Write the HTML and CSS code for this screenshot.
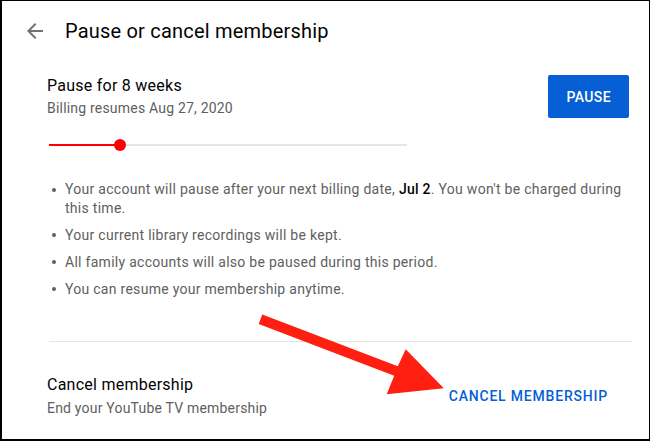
FILE: index.html
```html
<!DOCTYPE html>
<html lang="en">
<head>
<meta charset="utf-8">
<title>Pause or cancel membership</title>
<link rel="stylesheet" href="styles.css">
</head>
<body>
<div class="frame">
  <header class="head">
    <svg class="back" viewBox="0 0 24 24" width="24" height="24" aria-hidden="true"><path d="M20 11H7.830l5.59-5.59L12 4l-8 8 8 8 1.41-1.41L7.83 13H20v-2z"/></svg>
    <h1 class="head-title">Pause or cancel membership</h1>
  </header>
  <main class="content">
    <section class="pause">
      <div class="row">
        <div class="text">
          <div class="ttl">Pause for 8 weeks</div>
          <div class="sub">Billing resumes Aug 27, 2020</div>
        </div>
        <button class="btn-primary">PAUSE</button>
      </div>
      <div class="slider">
        <div class="fill" style="width:71px"></div>
        <div class="thumb"></div>
        <div class="rest"></div>
      </div>
      <ul class="notes">
        <li>Your account will pause after your next billing date, <b>Jul 2</b>. You won't be charged during this time.</li>
        <li>Your current library recordings will be kept.</li>
        <li>All family accounts will also be paused during this period.</li>
        <li>You can resume your membership anytime.</li>
      </ul>
    </section>
    <div class="divider"></div>
    <section class="cancel">
      <div class="text">
        <div class="ttl">Cancel membership</div>
        <div class="sub sub-gap">End your YouTube TV membership</div>
      </div>
      <button class="btn-text">CANCEL MEMBERSHIP</button>
    </section>
  </main>
</div>
<svg class="arrow" width="650" height="441" viewBox="0 0 650 441" aria-hidden="true">
  <polygon points="262.3,314.6 397.8,366.3 405.7,349.3 443.8,388.3 386.7,394.3 394.2,375.7 258.7,324"/>
</svg>
</body>
</html>
```

FILE: styles.css
```css
* { box-sizing: border-box; }
html, body { margin: 0; padding: 0; background: #fff; }
body {
  font-family: Roboto, "Liberation Sans", Arial, sans-serif;
  color: #030303;
  width: 650px;
  height: 441px;
  overflow: hidden;
}
.frame {
  width: 650px;
  height: 441px;
  border-style: solid;
  border-color: #000;
  border-width: 1px 1px 2px 2px;
  display: flex;
  flex-direction: column;
}
.head {
  height: 60px;
  display: flex;
  align-items: center;
  padding-left: 21px;
}
.back { fill: #717171; flex: none; }
.head-title {
  margin: 0 0 0 18px;
  font-size: 20px;
  font-weight: 400;
  line-height: 28px;
  letter-spacing: 0.2px;
  color: #030303;
}
.content {
  padding: 14px 20px 0 45px;
}
.row {
  display: flex;
  justify-content: space-between;
  align-items: flex-start;
}
.ttl {
  font-size: 16px;
  line-height: 22px;
  letter-spacing: 0.25px;
  color: #030303;
}
.sub {
  font-size: 14px;
  line-height: 20px;
  letter-spacing: 0.2px;
  color: #606060;
  margin-top: 1px;
}
.sub-gap { margin-top: 2px; }
.btn-primary {
  height: 43px;
  padding: 0 18px;
  border: 0;
  border-radius: 2px;
  background: #065fd4;
  color: #fff;
  font-family: inherit;
  font-size: 14px;
  font-weight: 500;
  letter-spacing: 0.4px;
}
.slider {
  width: 358px;
  height: 12px;
  margin-top: 21px;
  margin-left: 2px;
  display: flex;
  align-items: center;
}
.fill { height: 2px; background: #ff0000; flex: none; }
.thumb {
  width: 12px;
  height: 12px;
  border-radius: 50%;
  background: #ff0000;
  margin: 0 -6px;
  flex: none;
  position: relative;
  z-index: 1;
}
.rest { height: 2px; background: #e5e5e5; flex: 1; }
.notes {
  list-style: none;
  margin: 29px 0 0;
  padding: 0;
  font-size: 14px;
  line-height: 20px;
  letter-spacing: 0.28px;
  color: #606060;
}
.notes li {
  position: relative;
  padding-left: 18px;
  margin-bottom: 7px;
}
.notes li:first-child { line-height: 19px; }
.notes li::before {
  content: "";
  position: absolute;
  left: 5px;
  top: 8px;
  width: 4px;
  height: 4px;
  border-radius: 50%;
  background: #606060;
}
.notes b { color: #030303; font-weight: 500; }
.divider {
  height: 1px;
  background: #e5e5e5;
  margin: 42px -3px 0 2px;
}
.cancel {
  margin-top: 32px;
  display: flex;
  justify-content: space-between;
  align-items: center;
}
.btn-text {
  border: 0;
  background: none;
  padding: 10px 21px 10px 8px;
  color: #065fd4;
  font-family: inherit;
  font-size: 14px;
  font-weight: 500;
  letter-spacing: 0.8px;
}
.arrow {
  position: absolute;
  left: 0;
  top: 0;
  pointer-events: none;
}
.arrow polygon { fill: #fe1f10; }
```
